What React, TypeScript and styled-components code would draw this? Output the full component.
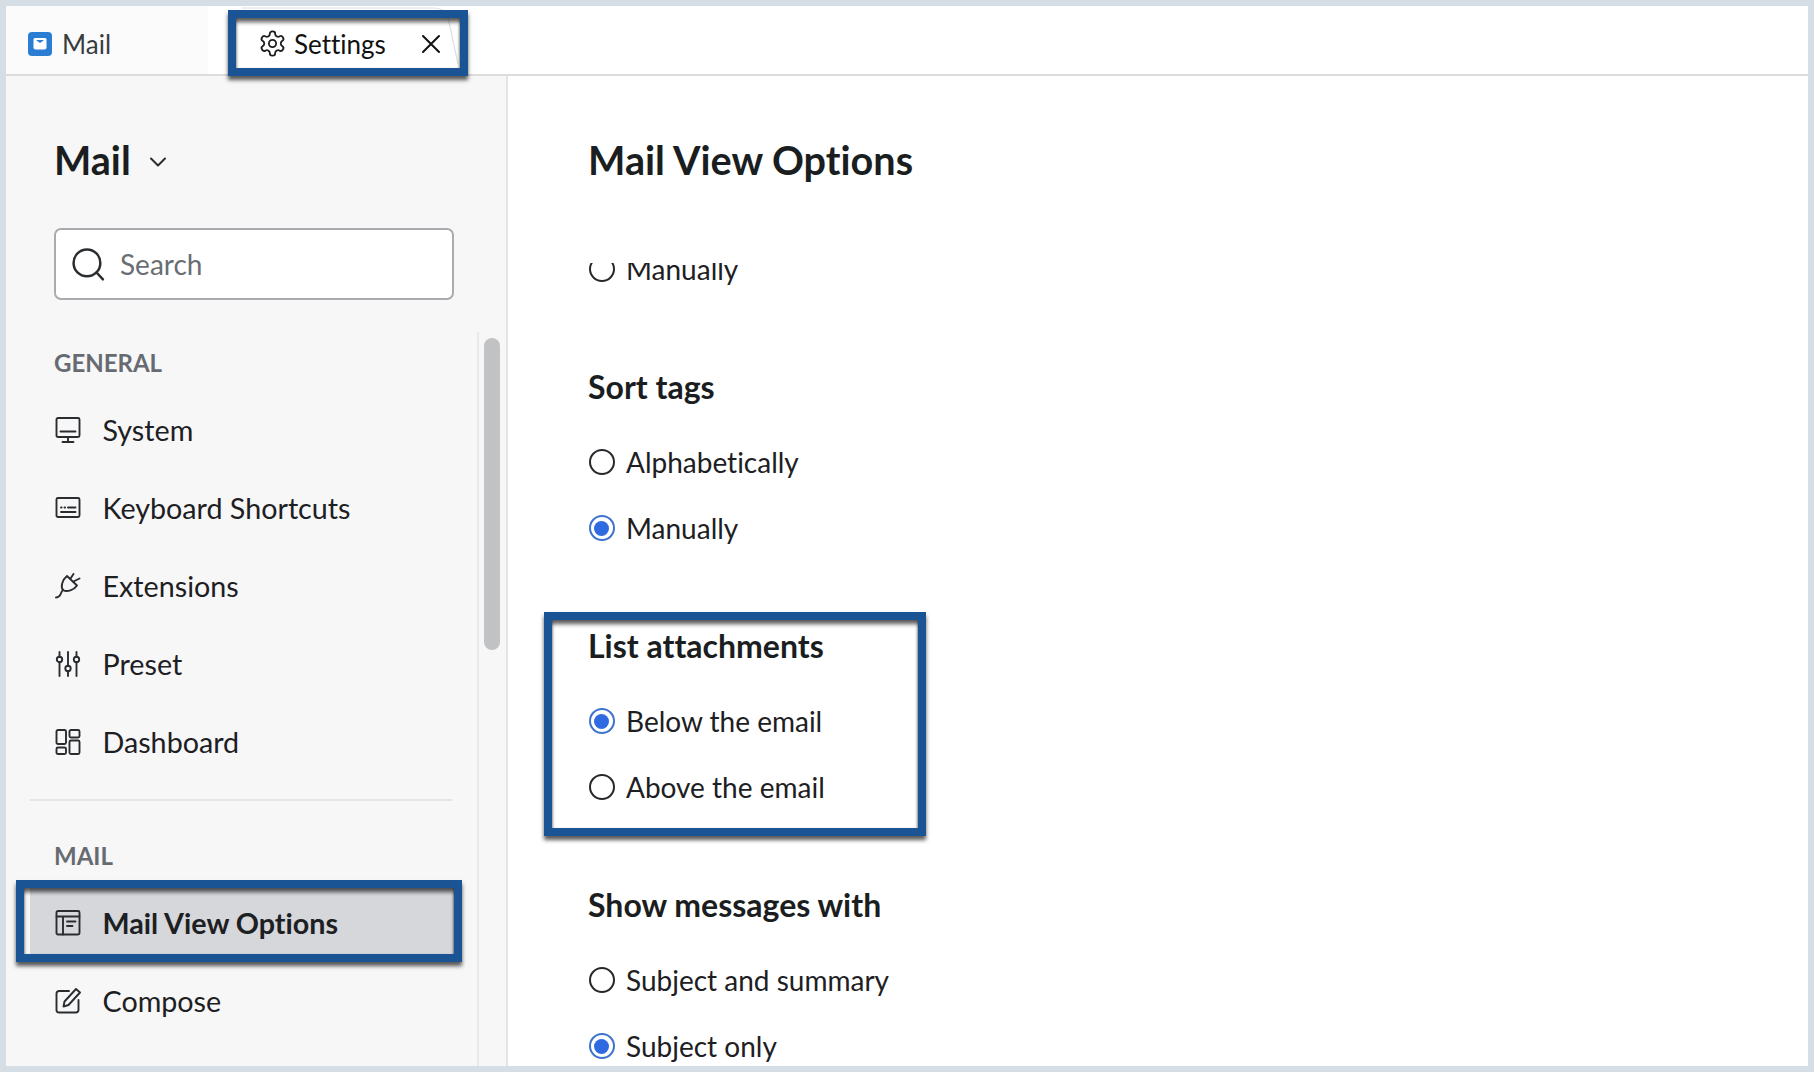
import React from "react";
import styled, { createGlobalStyle } from "styled-components";

const Global = createGlobalStyle`
  html, body { margin: 0; padding: 0; background: #d6dee5; }
  body { font-family: Lato, "Open Sans", sans-serif; color: #1d2023; font-variant-ligatures: none; }
  * { box-sizing: border-box; }
`;

const Frame = styled.div`
  width: 1814px;
  height: 1072px;
  padding: 6px;
  overflow: hidden;
`;
const Window = styled.div`
  height: 100%;
  display: flex;
  flex-direction: column;
  background: #fff;
  overflow: hidden;
`;
const TabBar = styled.div`
  height: 70px;
  flex: none;
  display: flex;
  border-bottom: 2px solid #dcdcdc;
  background: #fff;
`;
const MailTab = styled.div`
  width: 202px;
  display: flex;
  align-items: center;
  gap: 10px;
  padding: 7px 0 0 22px;
  background: #fbfbfb;
  font-size: 26px;
  color: #3a3d40;
`;
const SettingsTab = styled.div`
  position: relative;
  width: 256px;
  display: flex;
  align-items: center;
  gap: 7px;
  padding: 7px 0 0 50px;
  font-size: 26px;
  color: #111;
`;
const TabShape = styled.svg`
  position: absolute;
  left: 0;
  top: 0;
`;
const TabText = styled.span`
  position: relative;
  width: 120px;
`;
const Highlight = styled.div<{ $t: number; $r: number; $b: number; $l: number }>`
  position: absolute;
  top: ${(p) => p.$t}px;
  right: ${(p) => p.$r}px;
  bottom: ${(p) => p.$b}px;
  left: ${(p) => p.$l}px;
  border: 8px solid #1b5494;
  pointer-events: none;
  box-shadow: 0 4px 4px rgba(0, 0, 0, 0.65), inset 0 5px 4px -1px rgba(0, 0, 0, 0.65),
    inset -2px 0 2px -1px rgba(0, 0, 0, 0.28), inset 2px 0 2px -1px rgba(0, 0, 0, 0.22);
`;
const Body = styled.div`
  flex: 1;
  min-height: 0;
  display: flex;
`;
const Sidebar = styled.aside`
  width: 502px;
  flex: none;
  display: flex;
  flex-direction: column;
  background: #f7f7f8;
  border-right: 2px solid #e2e4e6;
  padding-top: 60px;
`;
const SidebarTitle = styled.div`
  height: 48px;
  display: flex;
  align-items: center;
  gap: 18px;
  padding-left: 48px;
  font-size: 39.5px;
  font-weight: 700;
  line-height: 48px;
  color: #1b1e21;
`;
const Search = styled.div`
  margin: 44px 0 0 48px;
  width: 400px;
  height: 72px;
  display: flex;
  align-items: center;
  gap: 14px;
  padding-left: 15px;
  background: #fff;
  border: 2px solid #a9abae;
  border-radius: 7px;
  font-size: 28px;
  color: #6a6e73;
`;
const SideScroll = styled.div`
  margin-top: 32px;
  flex: 1;
  min-height: 0;
  display: flex;
  overflow: hidden;
`;
const NavColumn = styled.nav`
  width: 471px;
  flex: none;
  padding-top: 16px;
`;
const Track = styled.div`
  flex: 1;
  border-left: 2px solid #e8e9ea;
  padding: 6px 0 0 5px;
`;
const Thumb = styled.div`
  width: 16px;
  height: 312px;
  border-radius: 8px;
  background: #c1c2c3;
`;
const NavLabel = styled.div<{ $mt?: number }>`
  height: 30px;
  line-height: 30px;
  margin-top: ${(p) => p.$mt ?? 0}px;
  padding-left: 48px;
  font-size: 24px;
  font-weight: 700;
  color: #666b72;
`;
const NavList = styled.div<{ $mt: number }>`
  margin-top: ${(p) => p.$mt}px;
`;
const NavRow = styled.div<{ $active?: boolean }>`
  position: relative;
  height: 78px;
  margin: 0 23px 0 24px;
  padding-left: 25px;
  display: flex;
  align-items: center;
  gap: 21.5px;
  font-size: 28.7px;
  font-weight: ${(p) => (p.$active ? 700 : 400)};
  background: ${(p) => (p.$active ? "#d5d7db" : "transparent")};
`;
const Divider = styled.div`
  margin: 18px 25px 0 24px;
  height: 2px;
  background: #e4e5e7;
`;
const Main = styled.main`
  flex: 1;
  min-width: 0;
  display: flex;
  flex-direction: column;
  padding-top: 60px;
`;
const PageTitle = styled.h1`
  margin: 0;
  padding-left: 80px;
  height: 48px;
  line-height: 48px;
  font-size: 39.6px;
  font-weight: 700;
  color: #1b1e21;
`;
const Scroller = styled.div`
  margin-top: 79px;
  flex: 1;
  min-height: 0;
  overflow: hidden;
  padding-left: 80px;
`;
const ScrollInner = styled.div`
  margin-top: -27px;
`;
const Group = styled.section<{ $boxed?: boolean }>`
  position: relative;
  margin-top: 65px;
  width: ${(p) => (p.$boxed ? "338px" : "auto")};
`;
const GroupTitle = styled.h2`
  margin: 0 0 22px;
  height: 40px;
  line-height: 40px;
  font-size: 32px;
  font-weight: 700;
  color: #1b1e21;
`;
const RadioRow = styled.div`
  height: 66px;
  display: flex;
  align-items: center;
  gap: 11.5px;
  font-size: 28px;
`;
const RadioMark = styled.span<{ $on?: boolean }>`
  width: 26px;
  height: 26px;
  margin-left: 0.5px;
  flex: none;
  border-radius: 50%;
  display: grid;
  place-items: center;
  background: #fff;
  border: 2px solid ${(p) => (p.$on ? "#3d72cf" : "#26282b")};
  &::after {
    content: "";
    width: 15px;
    height: 15px;
    border-radius: 50%;
    background: ${(p) => (p.$on ? "#2f6ae0" : "transparent")};
  }
`;

const Ico = styled.svg`
  flex: none;
  fill: none;
  stroke: #2a2d30;
  stroke-width: 1.9;
  stroke-linecap: round;
  stroke-linejoin: round;
`;
const GearSvg = styled(Ico)`
  position: relative;
  stroke: #1c1e20;
  stroke-width: 1.5;
`;
const CloseSvg = styled(Ico)`
  position: relative;
  stroke: #111;
  stroke-width: 2;
`;
const ChevronSvg = styled(Ico)`
  stroke-width: 2;
  margin-top: 4px;
`;
const SearchSvg = styled(Ico)`
  stroke-width: 2.4;
`;
const LogoSvg = styled.svg`
  flex: none;
`;
const NavSvg = ({ children }: { children: React.ReactNode }) => (
  <Ico width="26" height="26" viewBox="0 0 26 26">{children}</Ico>
);

const MailLogo = () => (
  <LogoSvg width="24" height="24" viewBox="0 0 24 24">
    <rect width="24" height="24" rx="4" fill="#2b7cd3" />
    <path d="M5.500 7.500a1.500 1.500 0 0 1 1.500-1.500h10a1.500 1.500 0 0 1 1.500 1.500v8a2 2 0 0 1-2 2h-9a2 2 0 0 1-2-2z" fill="#fff" />
    <path d="M8 8h8l-4 3z" fill="#2b7cd3" />
  </LogoSvg>
);
const Gear = () => (
  <GearSvg width="29" height="29" viewBox="0 0 24 24">
    <path d="M12.220 2h-.440a2 2 0 0 0-2 2v.180a2 2 0 0 1-1 1.730l-.430.250a2 2 0 0 1-2 0l-.150-.080a2 2 0 0 0-2.730.730l-.220.380a2 2 0 0 0 .730 2.730l.150.100a2 2 0 0 1 1 1.720v.510a2 2 0 0 1-1 1.740l-.150.090a2 2 0 0 0-.730 2.730l.220.380a2 2 0 0 0 2.730.730l.150-.080a2 2 0 0 1 2 0l.430.250a2 2 0 0 1 1 1.730V20a2 2 0 0 0 2 2h.440a2 2 0 0 0 2-2v-.180a2 2 0 0 1 1-1.730l.430-.250a2 2 0 0 1 2 0l.150.080a2 2 0 0 0 2.730-.730l.220-.390a2 2 0 0 0-.730-2.730l-.150-.080a2 2 0 0 1-1-1.740v-.500a2 2 0 0 1 1-1.740l.150-.090a2 2 0 0 0 .730-2.730l-.220-.380a2 2 0 0 0-2.730-.730l-.150.080a2 2 0 0 1-2 0l-.430-.250a2 2 0 0 1-1-1.730V4a2 2 0 0 0-2-2z" />
    <circle cx="12" cy="12" r="3" />
  </GearSvg>
);
const CloseX = () => (
  <CloseSvg width="20" height="20" viewBox="0 0 20 20">
    <path d="M2 2l16 16M18 2L2 18" />
  </CloseSvg>
);
const Chevron = () => (
  <ChevronSvg width="18" height="12" viewBox="0 0 18 12">
    <path d="M2 2.500l7 7 7-7" />
  </ChevronSvg>
);
const SearchIcon = () => (
  <SearchSvg width="35" height="35" viewBox="0 0 34 34">
    <circle cx="15.500" cy="15.500" r="13" />
    <path d="M25 25l6 6.500" />
  </SearchSvg>
);
const icons: Record<string, React.ReactNode> = {
  System: (
    <>
      <rect x="1.500" y="1" width="23" height="19" rx="1.500" />
      <path d="M5.500 14.500h15M13 20v5M7.500 25h11" />
    </>
  ),
  Keyboard: (
    <>
      <rect x="1.500" y="3" width="23" height="19" rx="1.500" />
      <path d="M6 12.500h.600M9.500 12.500h.600M13 12.500h7.500M6 17h14.500" />
    </>
  ),
  Extensions: (
    <>
      <path d="M12 3L22 12.500C19 17 12 19.500 8 17C5.500 14 7 7 12 3Z" />
      <path d="M8 17C5 19 7 24 1 24.500" />
      <path d="M15.500 5.500L18.500 1M18.500 8.500L24.500 5.500" />
    </>
  ),
  Preset: (
    <>
      <path d="M4.500 1v5M4.500 11v14M13 1v14M13 20v5M21.500 1v5M21.500 11v14" />
      <circle cx="4.500" cy="8.500" r="2.700" />
      <circle cx="13" cy="17.500" r="2.700" />
      <circle cx="21.500" cy="8.500" r="2.700" />
    </>
  ),
  Dashboard: (
    <>
      <rect x="1.500" y="1" width="9.500" height="14" rx="1.500" />
      <rect x="14.500" y="1" width="10" height="7.500" rx="1.500" />
      <rect x="1.500" y="18.500" width="9.500" height="6.500" rx="1.500" />
      <rect x="14.500" y="11.500" width="10" height="13.500" rx="1.500" />
    </>
  ),
  View: (
    <>
      <rect x="1.500" y="1" width="23" height="23.500" rx="1.500" />
      <path d="M1.500 6.500h23M8 6.500v18M12 11.500h8.500M12 16h5.500" />
    </>
  ),
  Compose: (
    <>
      <path d="M14 3H4a2.500 2.500 0 0 0-2.500 2.500V22A2.500 2.500 0 0 0 4 24.500h17a2.500 2.500 0 0 0 2.500-2.500V12" />
      <path d="M21 1l4 3.500L13.500 17 8.500 18.500l1-5z" />
    </>
  ),
};

type Item = { label: string; icon: string };
const general: Item[] = [
  { label: "System", icon: "System" },
  { label: "Keyboard Shortcuts", icon: "Keyboard" },
  { label: "Extensions", icon: "Extensions" },
  { label: "Preset", icon: "Preset" },
  { label: "Dashboard", icon: "Dashboard" },
];
const groups = [
  { title: "Sort tags", options: [["Alphabetically", false], ["Manually", true]] },
  { title: "List attachments", options: [["Below the email", true], ["Above the email", false]], boxed: true },
  { title: "Show messages with", options: [["Subject and summary", false], ["Subject only", true]] },
] as { title: string; options: [string, boolean][]; boxed?: boolean }[];

export default function App() {
  return (
    <Frame>
      <Global />
      <Window>
        <TabBar>
          <MailTab>
            <MailLogo />
            Mail
          </MailTab>
          <SettingsTab>
            <TabShape width="260" height="68" viewBox="0 0 260 68" fill="#fff" stroke="none">
              <path d="M-2 68C6 66 10 60 13 44L17 16C18 8 24 2 34 2H226C234 2 239 8 241 16L250 58C251 64 254 67 260 68Z" />
              <path d="M34 2H226C234 2 239 8 241 16L250 58" fill="none" stroke="#e0e0e0" strokeWidth="1.2" />
            </TabShape>
            <Gear />
            <TabText>Settings</TabText>
            <CloseX />
            <Highlight $t={4} $r={-4} $b={-2} $l={20} />
          </SettingsTab>
        </TabBar>
        <Body>
          <Sidebar>
            <SidebarTitle>
              Mail
              <Chevron />
            </SidebarTitle>
            <Search>
              <SearchIcon />
              Search
            </Search>
            <SideScroll>
              <NavColumn>
                <NavLabel>GENERAL</NavLabel>
                <NavList $mt={13}>
                  {general.map((it) => (
                    <NavRow key={it.label}>
                      <NavSvg>{icons[it.icon]}</NavSvg>
                      {it.label}
                    </NavRow>
                  ))}
                </NavList>
                <Divider />
                <NavLabel $mt={40}>MAIL</NavLabel>
                <NavList $mt={13}>
                  <NavRow $active>
                    <NavSvg>{icons.View}</NavSvg>
                    Mail View Options
                    <Highlight $t={-4} $r={-8} $b={0} $l={-14} />
                  </NavRow>
                  <NavRow>
                    <NavSvg>{icons.Compose}</NavSvg>
                    Compose
                  </NavRow>
                </NavList>
              </NavColumn>
              <Track>
                <Thumb />
              </Track>
            </SideScroll>
          </Sidebar>
          <Main>
            <PageTitle>Mail View Options</PageTitle>
            <Scroller>
              <ScrollInner>
                <RadioRow>
                  <RadioMark />
                  Manually
                </RadioRow>
                {groups.map((g) => (
                  <Group key={g.title} $boxed={g.boxed}>
                    <GroupTitle>{g.title}</GroupTitle>
                    {g.options.map(([label, on]) => (
                      <RadioRow key={label}>
                        <RadioMark $on={on} />
                        {label}
                      </RadioRow>
                    ))}
                    {g.boxed && <Highlight $t={-14} $r={0} $b={-16} $l={-44} />}
                  </Group>
                ))}
              </ScrollInner>
            </Scroller>
          </Main>
        </Body>
      </Window>
    </Frame>
  );
}
